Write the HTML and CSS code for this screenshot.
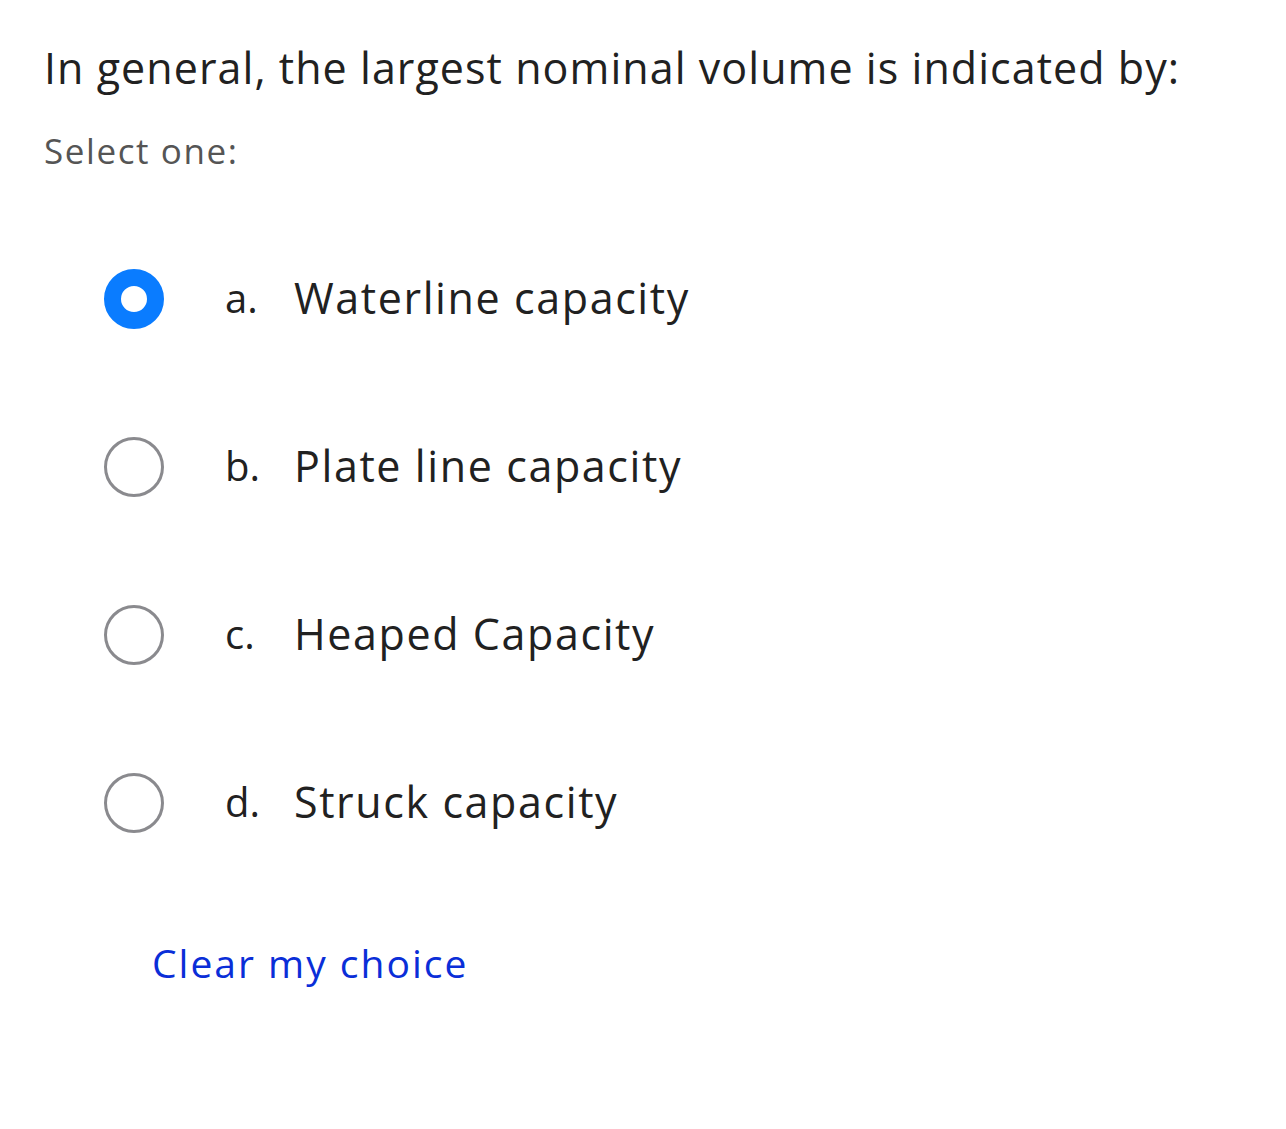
FILE: index.html
```html
<!DOCTYPE html>
<html>
<head>
<meta charset="utf-8">
<link rel="stylesheet" href="styles.css">
</head>
<body>
<div class="question">
  <h1 class="qtext">In general, the largest nominal volume is indicated by:</h1>
  <div class="prompt">Select one:</div>
  <div class="answers">
    <label class="option">
      <span class="radio checked"></span>
      <span class="letter">a.</span>
      <span class="text">Waterline capacity</span>
    </label>
    <label class="option">
      <span class="radio"></span>
      <span class="letter">b.</span>
      <span class="text">Plate line capacity</span>
    </label>
    <label class="option">
      <span class="radio"></span>
      <span class="letter">c.</span>
      <span class="text">Heaped Capacity</span>
    </label>
    <label class="option">
      <span class="radio"></span>
      <span class="letter">d.</span>
      <span class="text">Struck capacity</span>
    </label>
  </div>
  <a class="clear" href="#">Clear my choice</a>
</div>
</body>
</html>
```
FILE: styles.css
```css
html, body {
  margin: 0;
  padding: 0;
  background: #fff;
}
body {
  font-family: "Open Sans", "Noto Sans", sans-serif;
  color: #212121;
}
.question {
  padding: 40px 0 0 44px;
}
.qtext {
  margin: 0;
  font-size: 43px;
  font-weight: 400;
  line-height: 56px;
  letter-spacing: 1.05px;
}
.prompt {
  margin-top: 33px;
  font-size: 35px;
  line-height: 44px;
  letter-spacing: 1.6px;
  color: #555;
}
.answers {
  display: flex;
  flex-direction: column;
  gap: 108px;
  margin-top: 96px;
  padding-left: 60px;
}
.option {
  display: flex;
  align-items: center;
  height: 60px;
}
.radio {
  box-sizing: border-box;
  width: 60px;
  height: 60px;
  border-radius: 50%;
  border: 3.5px solid #8a8a8e;
  background: #fff;
  flex: none;
}
.radio.checked {
  border: 17.5px solid #0a7cff;
}
.letter {
  margin-left: 61px;
  width: 69px;
  font-size: 40px;
  padding-bottom: 4px;
}
.text {
  font-size: 43px;
  letter-spacing: 1.6px;
  padding-bottom: 4px;
}
.clear {
  display: inline-block;
  margin-top: 103px;
  margin-left: 108px;
  font-size: 39px;
  font-weight: 500;
  letter-spacing: 2px;
  color: #0a2ed8;
  text-decoration: none;
}
```
